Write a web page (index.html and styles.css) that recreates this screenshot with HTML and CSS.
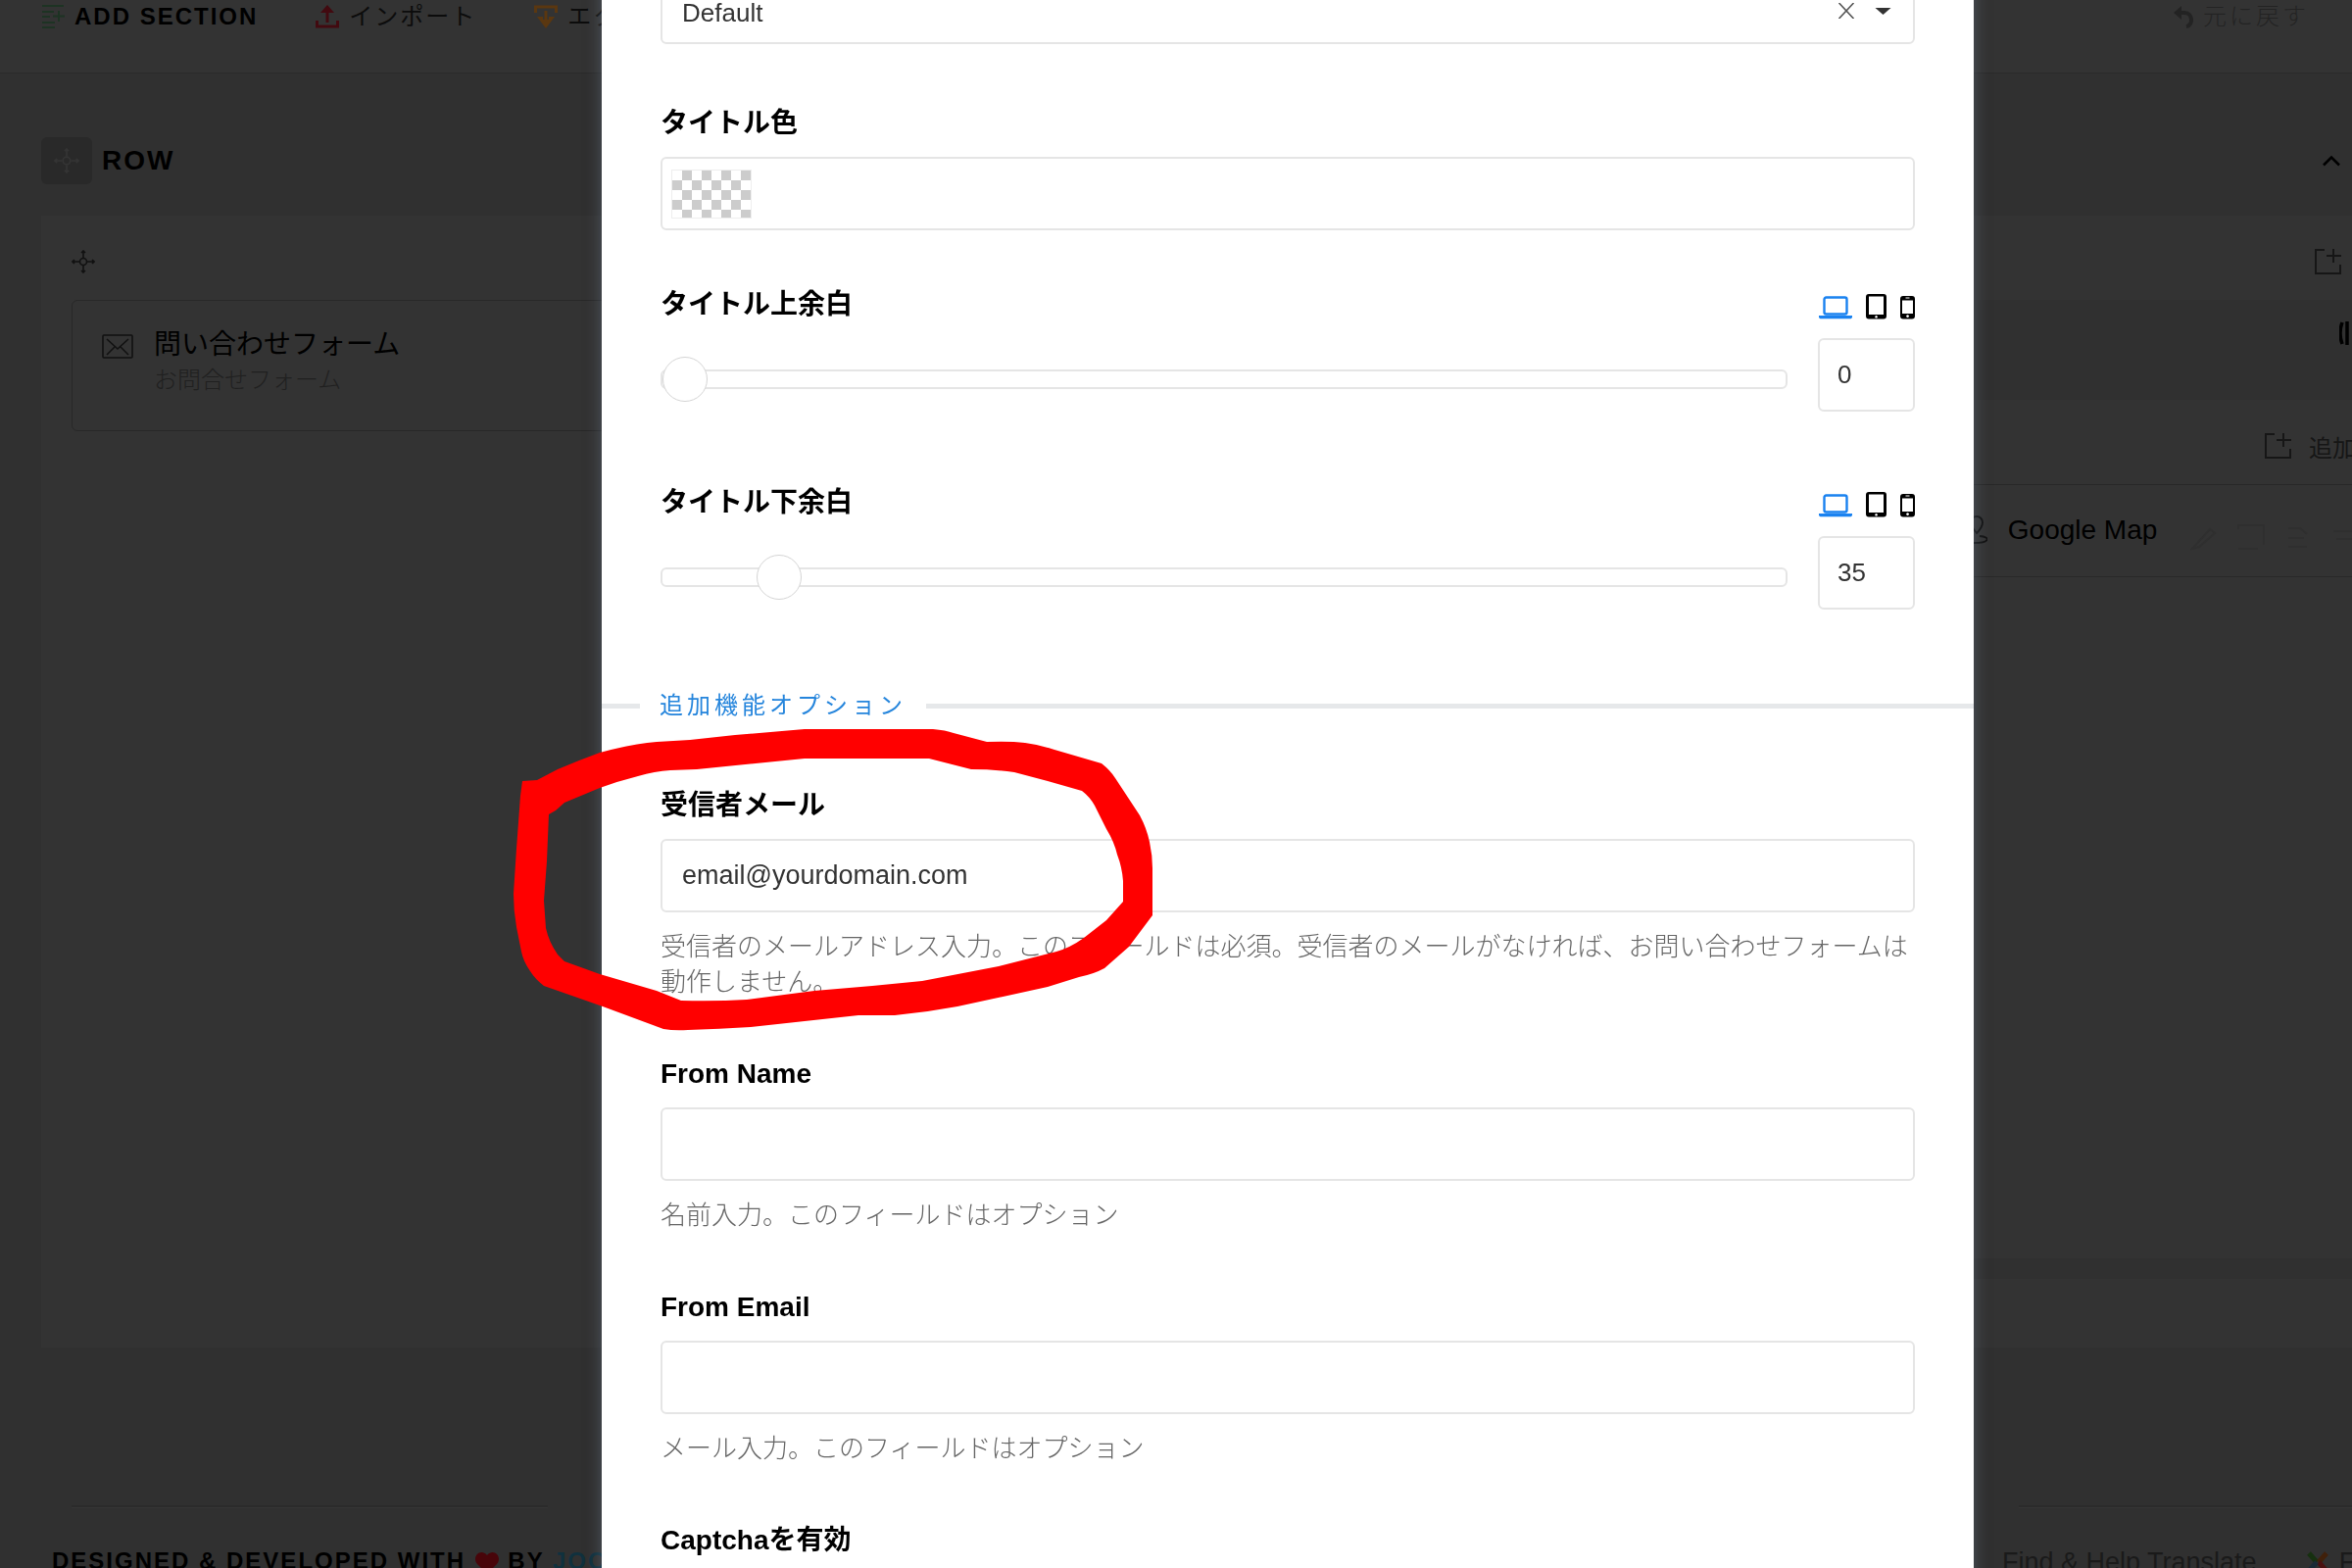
FILE: index.html
```html
<!DOCTYPE html>
<html lang="ja">
<head>
  <meta charset="UTF-8">
  <meta name="viewport" content="width=device-width, initial-scale=1">
  <title>問い合わせフォーム</title>
  <link rel="stylesheet" href="styles.css">
</head>
<body>
  <svg class="sprite" aria-hidden="true">
    <symbol id="icon-move" viewBox="0 0 24 24">
      <circle cx="12" cy="12" r="3.5" fill="none" stroke="currentColor" stroke-width="1.6"/>
      <path d="M12 8V2M12 16v6M8 12H2M16 12h6M10 3l2-2 2 2M10 21l2 2 2-2M3 10l-2 2 2 2M21 10l2 2-2 2" fill="none" stroke="currentColor" stroke-width="1.6"/>
    </symbol>
    <symbol id="icon-add" viewBox="0 0 28 28">
      <path d="M10 2H1v24h25v-9M19 1v14M12 8h15" fill="none" stroke="currentColor" stroke-width="2"/>
    </symbol>
    <symbol id="icon-laptop" viewBox="0 0 34 24">
      <rect x="5.5" y="1.5" width="23" height="17" rx="2" fill="none" stroke="currentColor" stroke-width="2.4"/>
      <path d="M0 20h34v1.5c0 1-1 1.8-2.5 1.8h-29C1 23.3 0 22.500 0 21.500z" fill="currentColor"/>
    </symbol>
    <symbol id="icon-tablet" viewBox="0 0 21 26">
      <path fill-rule="evenodd" d="M3 0h15a3 3 0 0 1 3 3v19.500a3 3 0 0 1-3 3H3a3 3 0 0 1-3-3V3a3 3 0 0 1 3-3zM3 2.500v18.500h15V2.500zM10.500 22a1.300 1.300 0 1 0 .1 0z" fill="currentColor"/>
    </symbol>
    <symbol id="icon-phone" viewBox="0 0 15 24">
      <path fill-rule="evenodd" d="M3 0h9a3 3 0 0 1 3 3v17.500a3 3 0 0 1-3 3H3a3 3 0 0 1-3-3V3a3 3 0 0 1 3-3zM2 4.500v13.500h11V4.500zM7.500 19.200a1.400 1.400 0 1 0 .1 0zM5.500 1.600v1h4v-1z" fill="currentColor"/>
    </symbol>
  </svg>

  <div class="page">
    <header class="toolbar">
      <button type="button" class="tool">
        <svg class="icon icon-green" viewBox="0 0 24 26"><path d="M1 2h22M1 8h12M1 13h8M1 19h13M1 24h13M18 7v11M12 12.500h12" fill="none" stroke="currentColor" stroke-width="2"/></svg>
        ADD SECTION
      </button>
      <button type="button" class="tool tool-light">
        <svg class="icon icon-red" viewBox="0 0 24 26"><path d="M1.500 17v6h21v-6M12 19V5" fill="none" stroke="currentColor" stroke-width="3"/><path d="M12 1l7 8H5z" fill="currentColor"/></svg>
        インポート
      </button>
      <button type="button" class="tool tool-light">
        <svg class="icon icon-orange" viewBox="0 0 24 26"><path d="M1.500 9V3h21v6M12 7v12" fill="none" stroke="currentColor" stroke-width="3"/><path d="M12 25l9-12h-6v3H9v-3H3z" fill="currentColor"/></svg>
        エクスポート
      </button>
      <button type="button" class="tool tool-undo">
        <svg class="icon-undo" viewBox="0 0 20 24"><path d="M8 1v14L0 8z" fill="currentColor"/><path d="M6 8h5c9 0 9 13 2 14" fill="none" stroke="currentColor" stroke-width="4"/></svg>
        元に戻す
      </button>
    </header>

    <main class="workspace">
      <div class="row-head">
        <span class="row-handle"><svg class="icon-lg"><use href="#icon-move"/></svg></span>
        <h1>ROW</h1>
        <button type="button" class="row-toggle" aria-label="Toggle">
          <svg viewBox="0 0 18 12"><path d="M1 10.500L9 2.500l8 8" fill="none" stroke="currentColor" stroke-width="2.500"/></svg>
        </button>
      </div>

      <div class="columns">
        <section class="column">
          <div class="column-head">
            <svg class="icon-move"><use href="#icon-move"/></svg>
          </div>
          <article class="addon addon-contact">
            <svg class="addon-icon" viewBox="0 0 32 26"><rect x="1" y="1" width="30" height="23" rx="1" fill="none" stroke="currentColor" stroke-width="1.600"/><path d="M5 5l11 10L27 5M5 21l8-8M27 21l-8-8" fill="none" stroke="currentColor" stroke-width="1.600"/></svg>
            <div>
              <h2>問い合わせフォーム</h2>
              <p>お問合せフォーム</p>
            </div>
          </article>
        </section>

        <section class="column column-side">
          <div class="column-head column-head-end column-head-outer">
            <button type="button" class="add-btn" aria-label="追加"><svg class="icon-add"><use href="#icon-add"/></svg></button>
          </div>
          <div class="nested-row">
            <div class="nested-head">
              <svg class="icon-columns" viewBox="0 0 26 26"><path d="M3 2q-4 11 0 22M8 1v24M15 1v24M22 2q4 11 0 22" fill="none" stroke="currentColor" stroke-width="3.500"/></svg>
            </div>
            <div class="nested-column">
              <div class="column-head column-head-end column-head-inner">
                <button type="button" class="add-btn"><svg class="icon-add"><use href="#icon-add"/></svg>追加</button>
              </div>
              <article class="addon addon-map">
                <svg class="addon-icon addon-icon-pin" viewBox="0 0 32 30"><path d="M21 18c-4-5-6-7-6-11a6 6 0 0 1 12 0c0 4-2 7-6 11zM16 21c-14 1-14 7 2 7s18-6 6-7" fill="none" stroke="currentColor" stroke-width="1.800"/></svg>
                <h2>Google Map</h2>
                <div class="addon-tools">
                  <svg viewBox="0 0 28 28"><path d="M2 26L20 6l5 4L9 24z" fill="none" stroke="currentColor" stroke-width="2"/></svg>
                  <svg viewBox="0 0 28 28"><path d="M1 6V2h26v20M1 26h20" fill="none" stroke="currentColor" stroke-width="2"/></svg>
                  <svg viewBox="0 0 28 28"><path d="M4 5h12l7 6M4 15h16M4 24h19" fill="none" stroke="currentColor" stroke-width="2"/></svg>
                  <svg viewBox="0 0 28 28"><path d="M2 8h24M5 16h18" fill="none" stroke="currentColor" stroke-width="2"/></svg>
                </div>
              </article>
            </div>
          </div>
        </section>
      </div>
    </main>

    <footer class="footer">
      <div class="footer-left">
        <hr>
        <p>DESIGNED &amp; DEVELOPED WITH
          <svg class="heart" viewBox="0 0 26 24"><path d="M13 23L3 13C-3 6 6-4 13 4c7-8 16 2 10 9z" fill="currentColor"/></svg>
          BY <a href="#">JOOMSHAPER</a></p>
      </div>
      <div class="footer-right">
        <hr>
        <nav>
          <a href="#">Find &amp; Help Translate</a>
          <a href="#" class="footer-joomla">
            <svg viewBox="0 0 24 24" fill="none" stroke-width="5"><path d="M3 3l8 9" stroke="#16300f"/><path d="M21 3l-8 9" stroke="#40200a"/><path d="M13 12l8 9" stroke="#4a1010"/><path d="M11 12l-8 9" stroke="#1a2a36"/></svg>
            Facebook</a>
        </nav>
      </div>
    </footer>
  </div>

  <div class="modal-overlay">
    <form class="modal" id="addonForm">
      <div class="form-group form-group-select">
        <select id="style" class="field" aria-label="Style">
          <option>Default</option>
        </select>
        <svg class="select-icons" viewBox="0 0 54 16"><path d="M1 0l15 16M16 0L1 16" fill="none" stroke="#555" stroke-width="1.600"/><path d="M38 5h16l-8 7z" fill="#333"/></svg>
      </div>

      <div class="form-group">
        <label for="titleColor">タイトル色</label>
        <button type="button" id="titleColor" class="field color-field"><span class="swatch"></span></button>
      </div>

      <div class="form-group form-group-slider">
        <div class="label-row">
          <label for="marginTop">タイトル上余白</label>
          <div class="devices">
            <svg class="laptop"><use href="#icon-laptop"/></svg>
            <svg class="tablet"><use href="#icon-tablet"/></svg>
            <svg class="phone"><use href="#icon-phone"/></svg>
          </div>
        </div>
        <div class="slider-row">
          <input type="range" id="marginTop" min="0" max="400" value="0">
          <input type="text" class="field number" value="0" aria-label="タイトル上余白">
        </div>
      </div>

      <div class="form-group form-group-slider">
        <div class="label-row">
          <label for="marginBottom">タイトル下余白</label>
          <div class="devices">
            <svg class="laptop"><use href="#icon-laptop"/></svg>
            <svg class="tablet"><use href="#icon-tablet"/></svg>
            <svg class="phone"><use href="#icon-phone"/></svg>
          </div>
        </div>
        <div class="slider-row">
          <input type="range" id="marginBottom" min="0" max="400" value="35">
          <input type="text" class="field number" value="35" aria-label="タイトル下余白">
        </div>
      </div>

      <div class="divider"><span>追加機能オプション</span></div>

      <div class="form-group marked">
        <label for="recipient">受信者メール</label>
        <input type="text" id="recipient" class="field" value="email@yourdomain.com">
        <p class="help">受信者のメールアドレス入力。このフィールドは必須。受信者のメールがなければ、お問い合わせフォームは動作しません。</p>
        <!-- hand-drawn marker -->
        <svg class="marker" viewBox="520 740 660 320">
          <path fill="#f00" fill-rule="evenodd" d="M533 798L548 797L569 786Q590 777 612 769Q645 760 670 758L704 756L750 751L821 745H952Q965 746 973 749L1007 758Q1030 757 1046 759Q1062 761 1076 766L1124 780Q1133 787 1138 795L1163 833Q1170 846 1173 860Q1176 874 1176 887V935L1152 967L1127 989Q1116 995 1101 998L1069 1008L977 1028Q945 1034 913 1037L876 1037L766 1049Q734 1051 702 1052Q688 1053 677 1051L615 1028L555 1007Q546 1000 541 992Q534 982 532 972L527 947Q524 930 524 913L527 867L531 813Z
          M560 832L567 828L576 820L612 805Q631 798 651 793Q668 788 684 787L711 786L821 775H948L991 786Q1015 786 1035 789L1069 798L1104 808Q1112 814 1117 823L1129 847Q1137 860 1140 873Q1145 886 1146 900V921L1129 940L1106 958Q1092 968 1078 972L1019 987L941 1002L890 1007L831 1012L762 1021Q730 1023 695 1022L670 1012L612 995L576 982L569 975Q560 962 557 948L555 920L558 880Z"/>
        </svg>
      </div>

      <div class="form-group">
        <label for="fromName">From Name</label>
        <input type="text" id="fromName" class="field">
        <p class="help">名前入力。このフィールドはオプション</p>
      </div>

      <div class="form-group">
        <label for="fromEmail">From Email</label>
        <input type="text" id="fromEmail" class="field">
        <p class="help">メール入力。このフィールドはオプション</p>
      </div>

      <div class="form-group">
        <label for="captcha">Captchaを有効</label>
        <input type="checkbox" id="captcha">
      </div>
    </form>
  </div>
</body>
</html>
```
FILE: styles.css
```css
* {
  margin: 0;
  padding: 0;
  box-sizing: border-box;
}

body {
  font-family: "Liberation Sans", "Noto Sans CJK JP", sans-serif;
  background-color: #303030;
  color: #000;
  height: 100vh;
  overflow: hidden;
}

button,
input,
select {
  font-family: inherit;
  color: inherit;
  background: none;
  border: none;
}

.sprite {
  display: none;
}

.page {
  height: 100vh;
  overflow: hidden;
}

/* toolbar */
.toolbar {
  display: flex;
  gap: 59px;
  padding: 0 44px 40px 42px;
  background-color: #333;
  border-bottom: 1px solid #2a2a2a;
}

.tool {
  display: flex;
  align-items: center;
  gap: 10px;
  line-height: 34px;
  font-size: 24px;
  font-weight: bold;
  letter-spacing: 2px;
  white-space: nowrap;
}

.tool-light {
  font-weight: normal;
  color: #0c0c0c;
}

.tool-undo {
  margin-left: auto;
  font-weight: 300;
  letter-spacing: 3px;
  color: #232323;
}

.icon {
  width: 24px;
  height: 26px;
}

.icon-green {
  color: #1d3323;
}

.icon-red {
  color: #420a10;
}

.icon-orange {
  color: #5a3710;
}

.icon-undo {
  width: 20px;
  height: 24px;
}

/* rows and columns */
.workspace {
  padding: 65px 0 0 42px;
}

.row-head {
  display: flex;
  align-items: center;
  gap: 10px;
  padding-right: 12px;
  margin-bottom: 32px;
}

.row-head h1 {
  font-size: 28px;
  letter-spacing: 2px;
}

.row-handle {
  display: flex;
  align-items: center;
  justify-content: center;
  width: 52px;
  height: 48px;
  border-radius: 6px;
  background-color: #292929;
  color: #343434;
}

.icon-lg {
  width: 26px;
  height: 26px;
}

.row-toggle {
  margin-left: auto;
  line-height: 0;
}

.row-toggle svg {
  width: 18px;
  height: 12px;
}

.columns {
  display: flex;
  min-height: 1155px;
  margin-right: -56px;
  background-color: #333;
}

.column {
  flex: 1;
  padding: 0 31px;
}

.column-side {
  flex: 0 0 23%;
  padding-right: 0;
}

.column-head {
  display: flex;
  align-items: center;
  height: 86px;
  padding-top: 8px;
}

.column-head-end {
  justify-content: flex-end;
}

.column-head-outer {
  padding-right: 66px;
}

.column-head-inner {
  padding-right: 52px;
}

.icon-move {
  width: 24px;
  height: 24px;
  color: #111;
}

.add-btn {
  display: flex;
  align-items: center;
  gap: 17px;
  font-size: 24px;
  color: #161616;
}

.icon-add {
  width: 28px;
  height: 28px;
}

.addon {
  display: flex;
  gap: 21px;
  border: 1px solid #282828;
}

.addon h2 {
  font-size: 28px;
  font-weight: normal;
  line-height: 38px;
}

.addon p {
  font-size: 24px;
  font-weight: 300;
  line-height: 34px;
  color: #202020;
}

.addon-icon {
  flex: none;
  width: 32px;
  height: 26px;
  color: #111;
}

.addon-contact {
  min-height: 134px;
  padding: 26px 30px;
  border-radius: 6px;
}

.addon-contact .addon-icon {
  margin-top: 8px;
}

.addon-map {
  align-items: center;
  min-height: 95px;
  padding: 0 32px 2px;
}

.addon-icon-pin {
  height: 30px;
}

.addon-tools {
  display: flex;
  gap: 20px;
  padding: 14px 0 0 13px;
  color: #2f2f2f;
}

.addon-tools svg {
  flex: none;
  width: 28px;
  height: 28px;
}

.addon-map h2 {
  white-space: nowrap;
}

.nested-row {
  padding-bottom: 21px;
  background-color: #303030;
}

.nested-head {
  display: flex;
  justify-content: flex-end;
  height: 102px;
  padding: 21px 43px 0 0;
}

.icon-columns {
  width: 26px;
  height: 26px;
}

.nested-column {
  min-height: 876px;
  padding-left: 31px;
  background-color: #333;
}

/* footer */
.footer {
  display: flex;
  justify-content: space-between;
  padding-top: 161px;
}

.footer hr {
  border: none;
  border-top: 2px solid #2b2b2b;
  border-bottom: 1px solid #353535;
}

.footer-left {
  padding-left: 53px;
}

.footer-left hr {
  width: 486px;
  margin-left: 20px;
}

.footer-left p {
  margin-top: 37px;
  font-size: 24px;
  font-weight: bold;
  line-height: 34px;
  letter-spacing: 2px;
  white-space: nowrap;
}

.footer-left a {
  color: #10313e;
  text-decoration: none;
}

.heart {
  width: 26px;
  height: 24px;
  color: #48050a;
  vertical-align: middle;
}

.footer-right {
  width: 357px;
}

.footer-right hr {
  margin-left: 17px;
}

.footer-right nav {
  display: flex;
  gap: 50px;
  margin-top: 38px;
  line-height: 34px;
}

.footer-right a {
  font-size: 27px;
  color: #1a1a1a;
  text-decoration: none;
  white-space: nowrap;
}

.footer-joomla {
  display: flex;
  align-items: center;
  gap: 10px;
}

.footer-joomla svg {
  width: 24px;
  height: 24px;
}

/* modal */
.modal-overlay {
  position: fixed;
  inset: 0;
  display: flex;
  padding: 0 386px 0 614px;
  overflow: hidden;
}

.modal {
  flex: 1;
  min-width: 0;
  align-self: flex-start;
  margin-top: -19px;
  padding: 0 60px 60px;
  background-color: #fff;
  box-shadow: 0 0 14px rgba(110, 125, 145, 0.5);
}

.form-group {
  position: relative;
  margin-bottom: 55px;
}

.form-group-select {
  margin-bottom: 60px;
}

.form-group-slider {
  margin-bottom: 72px;
}

label {
  display: block;
  margin-bottom: 13px;
  font-size: 28px;
  font-weight: bold;
  line-height: 42px;
}

.field {
  display: block;
  width: 100%;
  height: 75px;
  padding: 0 20px;
  border: 2px solid #e5e5e5;
  border-radius: 6px;
  background-color: #fff;
  color: #333;
  font-size: 27px;
}

select.field {
  appearance: none;
  height: 64px;
  font-size: 26px;
}

.select-icons {
  position: absolute;
  top: 22px;
  right: 24px;
  width: 55px;
  height: 16px;
  pointer-events: none;
}

.color-field {
  padding: 0 9px;
}

.swatch {
  display: block;
  width: 82px;
  height: 50px;
  border: 1px solid #eee;
  background: repeating-conic-gradient(#ccc 0 25%, #fff 0 50%) 0 0 / 20px 20px;
}

.label-row {
  display: flex;
  justify-content: space-between;
}

.devices {
  display: flex;
  align-items: flex-end;
  gap: 14px;
  height: 36px;
}

.devices svg {
  height: 24px;
}

.devices .laptop {
  width: 34px;
  color: #1a82f0;
}

.devices .tablet {
  width: 21px;
  height: 26px;
}

.devices .phone {
  width: 15px;
}

.slider-row {
  display: flex;
  align-items: center;
  gap: 31px;
}

.slider-row .number {
  width: 99px;
  padding: 0 18px;
  font-size: 26px;
}

input[type="range"] {
  appearance: none;
  flex: 1;
  height: 46px;
  margin-top: 8px;
}

input[type="range"]::-webkit-slider-runnable-track {
  height: 20px;
  border: 2px solid #e5e5e5;
  border-radius: 6px;
}

input[type="range"]::-webkit-slider-thumb {
  appearance: none;
  width: 46px;
  height: 46px;
  margin-top: -15px;
  border: 1px solid #d5d5d5;
  border-radius: 50%;
  background-color: #fff;
}

.divider {
  display: flex;
  align-items: center;
  gap: 20px;
  margin: 80px -60px 63px;
  color: #2585dc;
  font-size: 24px;
  line-height: 36px;
  letter-spacing: 4px;
}

.divider::before,
.divider::after {
  content: "";
  height: 5px;
  background-color: #e6e8ea;
}

.divider::before {
  width: 39px;
}

.divider::after {
  flex: 1;
}

.help {
  margin-top: 17px;
  color: #666;
  font-size: 26px;
  font-weight: 300;
  line-height: 36px;
}

.marker {
  position: absolute;
  top: -62px;
  left: -154px;
  width: 660px;
  height: 320px;
  pointer-events: none;
}
```
